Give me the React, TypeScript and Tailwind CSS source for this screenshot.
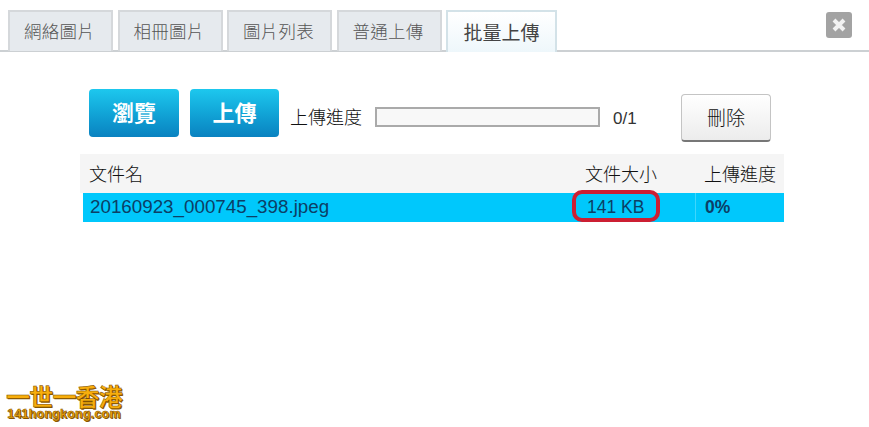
export default function App() {
  const cjk = "font-['Noto_Sans_CJK_TC','Liberation_Sans',sans-serif]";
  const tabs = ["網絡圖片", "相冊圖片", "圖片列表", "普通上傳"];
  return (
    <div className={`relative w-[869px] h-[427px] overflow-hidden bg-white text-[#222] ${cjk}`}>
      <div className="flex gap-[4.5px] h-[52px] pt-[10px] pl-[8px] border-b-2 border-[#ccd0d3]">
        {tabs.map((t) => (
          <div key={t} className="w-[105px] h-[41px] flex items-center justify-center bg-[#e6eaee] border-2 border-b-0 border-[#d5d8db] pr-[2px] text-[17.5px] tracking-[0.2px] font-light text-[#555]">
            {t}
          </div>
        ))}
        <div className="w-[111px] h-[42px] flex items-center justify-center bg-gradient-to-b from-white to-[#eef7fb] border-2 border-b-0 border-[#d3e2e8] text-[19px] text-[#444]">
          批量上傳
        </div>
      </div>
      <button className="absolute left-[826px] top-[12px] w-[26px] h-[26px] rounded-[3px] bg-[#a3a3a3] flex items-center justify-center">
        <svg width="16" height="16" viewBox="0 0 16 16"><path d="M3 3 L13 13 M13 3 L3 13" stroke="#f2f2f2" strokeWidth="4" /></svg>
      </button>

      <div className="flex items-start pl-[89px] pt-[37px] h-[102px]">
        <div className="w-[90px] h-[48px] rounded-[4px] bg-gradient-to-b from-[#1dc8ee] to-[#0a82c0] text-white font-bold text-[22px] flex items-center justify-center pb-[3px]">瀏覽</div>
        <div className="ml-[11px] w-[89px] h-[48px] rounded-[4px] bg-gradient-to-b from-[#1dc8ee] to-[#0a82c0] text-white font-bold text-[22px] flex items-center justify-center pb-[3px]">上傳</div>
        <div className="ml-[11px] w-[85px] h-[48px] flex items-center text-[18px] font-light text-[#111] mt-[3px]">上傳進度</div>
        <div className="mt-[18px] w-[225px] h-[20px] border-2 border-[#aaaaaa] bg-[#f8f8f8]" />
        <div className="ml-[13px] mt-[18px] w-[68px] h-[24px] flex items-center font-['Liberation_Sans',sans-serif] text-[17px] text-[#333]">0/1</div>
        <div className="mt-[5px] w-[90px] h-[48px] rounded-[4px] border border-[#c4c4c4] border-b-2 border-b-[#777] bg-gradient-to-b from-white to-[#ececec] text-[19px] font-light text-[#111] flex items-center justify-center">刪除</div>
      </div>

      <div className="relative ml-[80px] w-[704px]">
        <div className="flex items-center h-[39px] bg-[#f5f5f5] text-[18px] font-light text-[#111]">
          <div className="w-[505px] pl-[9px]">文件名</div>
          <div className="w-[119px]">文件大小</div>
          <div>上傳進度</div>
        </div>
        <div className="ml-[3px] flex items-center h-[29px] bg-[#00c8fc] font-['Liberation_Sans',sans-serif] text-[#0c3f66] pb-[1px]">
          <div className="w-[491px] pl-[7px] text-[18.8px]">20160923_000745_398.jpeg</div>
          <div className="w-[121px] pl-[13px] text-[17.5px]">141 KB</div>
          <div className="h-full flex items-center border-l border-[#3fd6fc] pl-[9px] text-[17.5px] font-bold">0%</div>
        </div>
        <div className="absolute left-[492px] top-[36px] w-[88px] h-[32px] rounded-[10px] border-[4px] border-[#cc1f33]" />
      </div>

      <div className="absolute left-[4px] top-[383px] w-[120px] flex flex-col items-center font-bold text-[#f8ae0c] [-webkit-text-stroke:0.5px_#7a4a00]">
        <div className="h-[25px] text-[24px] leading-[25px] tracking-[-0.8px] whitespace-nowrap [text-shadow:1px_1px_0_#8a5a00]">一世一香港</div>
        <div className="h-[13px] font-['Liberation_Sans',sans-serif] text-[12.5px] leading-[13px] tracking-[0.2px] whitespace-nowrap [text-shadow:1px_1px_0_#8a5a00]">141hongkong.com</div>
      </div>
    </div>
  );
}
